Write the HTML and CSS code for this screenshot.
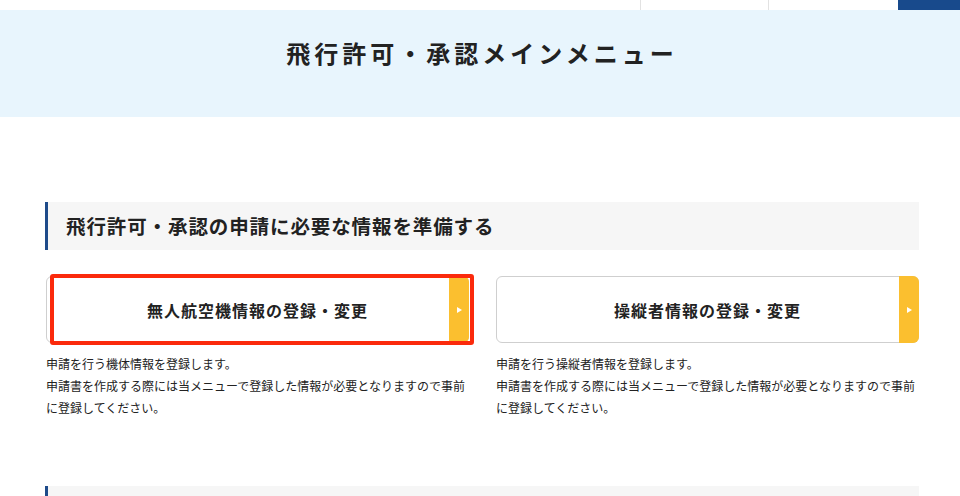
FILE: index.html
```html
<!DOCTYPE html>
<html lang="ja">
<head>
  <meta charset="UTF-8">
  <meta name="viewport" content="width=device-width, initial-scale=1.0">
  <title>飛行許可・承認メインメニュー</title>
  <link rel="stylesheet" href="styles.css">
</head>
<body>
  <header class="topbar">
    <div class="topbar-spacer"></div>
    <div class="topbar-item"></div>
    <div class="topbar-item"></div>
    <div class="topbar-login"></div>
  </header>
  <div class="page-head">
    <h1 class="page-title">飛行許可・承認メインメニュー</h1>
  </div>
  <main class="content">
    <section class="section">
      <h2 class="section-title">飛行許可・承認の申請に必要な情報を準備する</h2>
      <div class="menu-grid">
        <div class="menu-item">
          <a href="#" class="menu-btn menu-btn--marked">
            <span class="menu-btn-label">無人航空機情報の登録・変更</span>
            <span class="menu-btn-arrow" aria-hidden="true"></span>
          </a>
          <p class="menu-desc">申請を行う機体情報を登録します。<br>申請書を作成する際には当メニューで登録した情報が必要となりますので事前に登録してください。</p>
        </div>
        <div class="menu-item">
          <a href="#" class="menu-btn">
            <span class="menu-btn-label">操縦者情報の登録・変更</span>
            <span class="menu-btn-arrow" aria-hidden="true"></span>
          </a>
          <p class="menu-desc">申請を行う操縦者情報を登録します。<br>申請書を作成する際には当メニューで登録した情報が必要となりますので事前に登録してください。</p>
        </div>
      </div>
    </section>
    <section class="section">
      <h2 class="section-title">&nbsp;</h2>
    </section>
  </main>
</body>
</html>
```

FILE: styles.css
```css
*, *::before, *::after {
  margin: 0;
  padding: 0;
  box-sizing: border-box;
}
body {
  font-family: "Noto Sans CJK JP", "Noto Sans", sans-serif;
  color: #222222;
  background: #ffffff;
  overflow: hidden;
}
a {
  color: inherit;
  text-decoration: none;
}
.topbar {
  display: flex;
  height: 10px;
  background: #ffffff;
}
.topbar-spacer {
  flex: 1;
}
.topbar-item {
  width: 128px;
  border-left: 1px solid #e2e2e2;
}
.topbar-item + .topbar-item {
  width: 130px;
}
.topbar-login {
  width: 62px;
  background: #184a8c;
}
.page-head {
  height: 107px;
  background: #e8f5fd;
  display: flex;
  align-items: center;
  justify-content: center;
}
.page-title {
  font-size: 24px;
  font-weight: 700;
  letter-spacing: 4px;
  padding-left: 4px;
  margin-top: -22px;
}
.content {
  padding: 85px 41px 0 45px;
}
.section + .section {
  margin-top: 67px;
}
.section-title {
  height: 48px;
  display: flex;
  align-items: center;
  padding-left: 18px;
  padding-bottom: 2px;
  border-left: 3px solid #1e4b8a;
  background: #f6f6f6;
  font-size: 19.5px;
  font-weight: 700;
  letter-spacing: 0.9px;
}
.menu-grid {
  display: grid;
  grid-template-columns: 423px 423px;
  gap: 27px;
  padding-left: 1px;
  margin-top: 26px;
}
.menu-btn {
  position: relative;
  display: flex;
  align-items: center;
  justify-content: center;
  height: 67px;
  border: 1px solid #cfcfcf;
  border-radius: 6px;
  background: #ffffff;
}
.menu-btn-label {
  font-size: 16px;
  font-weight: 700;
  letter-spacing: 1px;
}
.menu-btn-arrow {
  position: absolute;
  top: -1px;
  right: -1px;
  bottom: -1px;
  width: 20px;
  background: #fbbf2f;
  border-radius: 0 6px 6px 0;
}
.menu-btn-arrow::after {
  content: "";
  position: absolute;
  left: 8px;
  top: calc(50% - 3px);
  border-left: 5px solid #ffffff;
  border-top: 3px solid transparent;
  border-bottom: 3px solid transparent;
}
.menu-btn--marked::before {
  content: "";
  position: absolute;
  left: 3px;
  top: -3px;
  right: -6px;
  bottom: -3px;
  border: 4px solid #fb2a0c;
  border-radius: 3px;
  z-index: 1;
}
.menu-desc {
  margin-top: 10px;
  font-size: 12px;
  line-height: 22px;
  letter-spacing: 0;
}
```
